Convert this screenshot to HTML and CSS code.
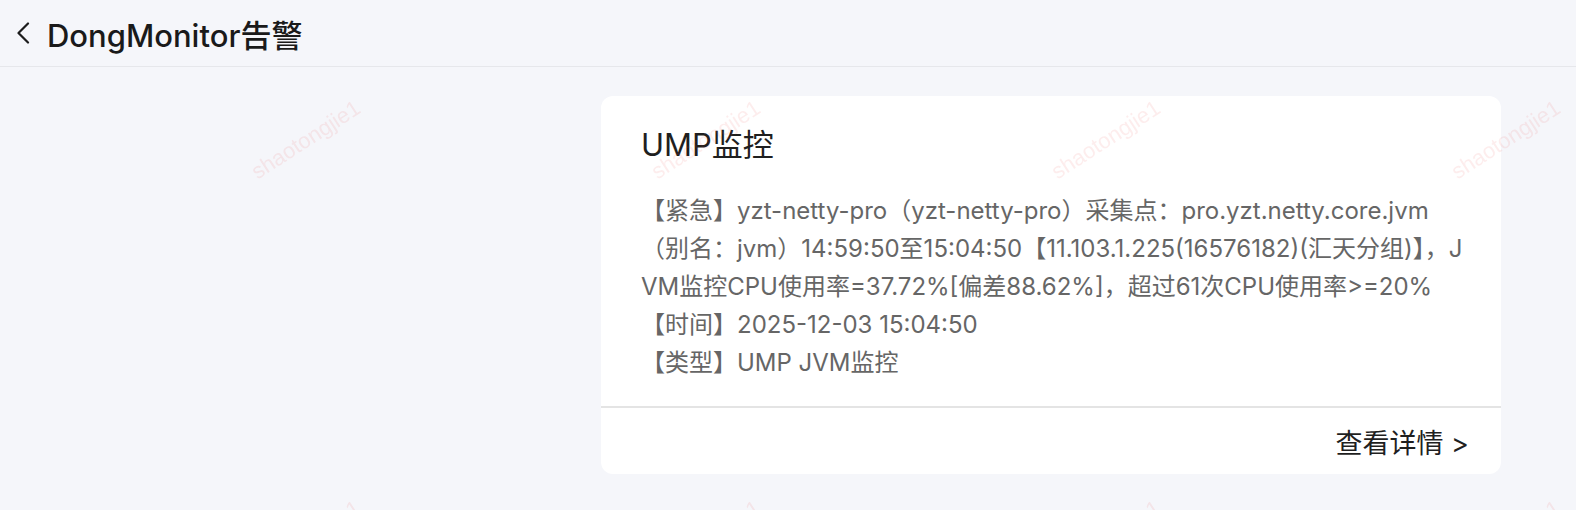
FILE: index.html
```html
<!DOCTYPE html>
<html lang="zh-CN">
<head>
<meta charset="utf-8">
<title>DongMonitor告警</title>
<link rel="stylesheet" href="styles.css">
</head>
<body>
<header class="header">
  <svg class="back" width="14" height="22" viewBox="0 0 14 22"><path d="M12 1.5 L2.5 11 L12 20.5" fill="none" stroke="#1c1c1c" stroke-width="2.2" stroke-linecap="round" stroke-linejoin="round"/></svg>
  <h1 class="page-title">DongMonitor告警</h1>
</header>
<main class="main">
  <section class="card">
    <div class="card-body">
      <h2 class="card-title">UMP监控</h2>
      <p class="content">【紧急】yzt-netty-pro（yzt-netty-pro）采集点：pro.yzt.netty.core.jvm
（别名：jvm）14:59:50至15:04:50【11.103.1.225(16576182)(汇天分组)】，JVM监控CPU使用率=37.72%[偏差88.62%]，超过61次CPU使用率&gt;=20%
【时间】2025-12-03 15:04:50
【类型】UMP JVM监控</p>
    </div>
    <div class="card-footer">查看详情 &gt;</div>
  </section>
</main>
<div class="watermarks">
  <span>shaotongjie1</span><span>shaotongjie1</span><span>shaotongjie1</span><span>shaotongjie1</span>
  <span>shaotongjie1</span><span>shaotongjie1</span><span>shaotongjie1</span><span>shaotongjie1</span>
</div>
</body>
</html>
```
FILE: styles.css
```css
html, body {
  margin: 0;
  padding: 0;
}
body {
  background: #f5f6fa;
  font-family: "Inter", "Noto Sans CJK SC", sans-serif;
  width: 1576px;
  height: 510px;
  overflow: hidden;
}
.header {
  height: 66px;
  border-bottom: 1px solid #e6e7eb;
  display: flex;
  align-items: center;
  padding-left: 16px;
}
.back {
  display: block;
}
.page-title {
  margin: 0 0 0 17px;
  font-size: 31px;
  font-weight: 500;
  color: #1a1a1a;
}
.main {
  display: flex;
  justify-content: flex-end;
  padding: 29px 75px 0 0;
}
.card {
  width: 900px;
  background: #ffffff;
  border-radius: 12px;
}
.card-body {
  padding: 27px 32px 24px 40px;
}
.card-title {
  margin: 0;
  font-size: 31px;
  font-weight: 400;
  color: #1f1f1f;
  line-height: 44px;
}
.content {
  margin: 25px 0 0 0;
  font-size: 24px;
  line-height: 38px;
  color: #666;
  white-space: pre-line;
  word-break: break-all;
}
.card-footer {
  border-top: 2px solid #e4e4e4;
  height: 66px;
  display: flex;
  align-items: center;
  justify-content: flex-end;
  padding-right: 32px;
  font-size: 27px;
  color: #1f1f1f;
}
.watermarks {
  position: fixed;
  left: 106px;
  top: -60px;
  display: grid;
  grid-template-columns: repeat(4, 400px);
  grid-auto-rows: 400px;
  pointer-events: none;
}
.watermarks span {
  display: flex;
  align-items: center;
  justify-content: center;
  font-family: "Liberation Sans", sans-serif;
  font-size: 22px;
  color: rgba(235, 80, 80, 0.1);
  transform: rotate(-33deg);
}
```
